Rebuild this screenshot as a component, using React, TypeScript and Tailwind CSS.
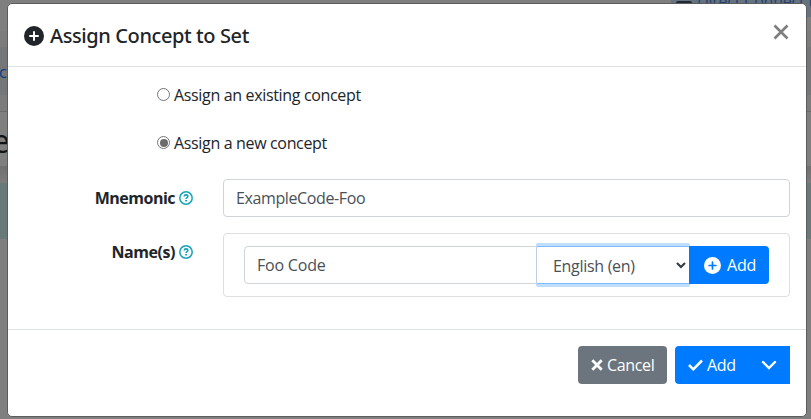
import type { ReactNode } from "react";

function HelpIcon() {
  return (
    <svg className="ml-[3px] size-[14px] shrink-0 text-[#17a2b8]" viewBox="0 0 14 14" fill="none" stroke="currentColor">
      <circle cx="7" cy="7" r="6.2" strokeWidth="1.5" />
      <path d="M5.2 5.5c.1-1 .8-1.6 1.8-1.6s1.8.6 1.8 1.5c0 1.2-1.7 1.2-1.7 2.5" strokeWidth="1.6" />
      <path d="M7.1 9v1.6" strokeWidth="1.8" />
    </svg>
  );
}

function PlusDisc({ className, plus }: { className: string; plus: string }) {
  return (
    <svg className={className} viewBox="0 0 20 20">
      <circle cx="10" cy="10" r="10" fill="currentColor" />
      <path d="M10 6v8M6 10h8" stroke={plus} strokeWidth="2" strokeLinecap="round" />
    </svg>
  );
}

function Label({ children }: { children: ReactNode }) {
  return (
    <div className="flex h-[38px] w-[169px] items-center justify-end font-bold">
      {children}
      <HelpIcon />
    </div>
  );
}

function Radio({ checked }: { checked?: boolean }) {
  return (
    <span className="mr-1 -mt-px flex size-[13px] items-center justify-center rounded-full border border-[#767676] bg-white">
      {checked && <span className="size-[8px] rounded-full bg-[#6b6b6b]" />}
    </span>
  );
}

function Page() {
  return (
    <div className="h-[419px] overflow-hidden bg-[#7f7f7f]">
      <div className="flex h-[17px] justify-end">
        <div className="flex h-[17px] w-[140px] items-start overflow-hidden bg-[#65727f] pl-[5px]">
          <span className="mt-px h-[10px] w-[16px] shrink-0 rounded-xs bg-[#222a35]" />
          <span className="-mt-[11px] ml-[5px] whitespace-nowrap text-[16px] leading-[24px] tracking-[-0.2px] text-[#26426b]">Direct Connect t</span>
        </div>
      </div>
      <div className="h-[14px]" />
      <div className="h-4 bg-[#7c7c7c]" />
      <div className="h-12 bg-[#747678] pt-[13px] text-[16px] leading-[24px] text-[#073e80]">
        <span className="-ml-px tracking-[-0.5px]">ct</span>
      </div>
      <div className="h-4 bg-[#7c7c7c]" />
      <div className="h-px bg-[#6b6b6b]" />
      <div className="h-[54px] pt-[11px] text-[32px] leading-[36px] text-[#111315]">
        <span className="-ml-[8px]">e</span>
      </div>
      <div className="h-[17px] bg-linear-to-b from-[#707070] to-[#7c7c7c]" />
      <div className="h-14 bg-[#687979]" />
    </div>
  );
}

export default function App() {
  return (
    <div className="relative h-[419px] w-[811px] overflow-hidden font-['Open_Sans','Noto_Sans',sans-serif] text-[16px] leading-[24px] text-[#212529]">
      <Page />
      <div className="absolute top-[3px] left-[7px] flex h-[414px] w-[800px] flex-col rounded-[5px] border border-[#5c5c5c] bg-white">
        <header className="flex h-[63px] items-start justify-between border-b border-[#dee2e6] px-4">
          <div className="flex h-[63px] items-center text-[20px]">
            <PlusDisc className="mr-[6px] size-5" plus="#ffffff" />
            <h5 className="font-['Noto_Sans','Open_Sans',sans-serif] font-medium tracking-[-0.4px]">Assign Concept to Set</h5>
          </div>
          <svg className="mt-5 mr-px size-4 text-[#7f7f7f]" viewBox="0 0 16 16" fill="none" stroke="currentColor" strokeWidth="2.7">
            <path d="M1.5 1.5l13 13M14.5 1.5l-13 13" />
          </svg>
        </header>
        <main className="h-[262px] px-4">
          <div className="flex h-12 items-center pt-2 pl-[133px]">
            <Radio />
            <span className="tracking-[-0.34px]">Assign an existing concept</span>
          </div>
          <div className="flex h-12 items-center pt-2 pl-[133px]">
            <Radio checked />
            <span className="tracking-[-0.34px]">Assign a new concept</span>
          </div>
          <div className="mt-4 flex">
            <div className="w-[199px]">
              <Label><span className="pr-px tracking-[-0.5px]">Mnemonic</span></Label>
            </div>
            <div className="flex h-[38px] w-[567px] items-center rounded-[4px] border border-[#ced4da] px-3 text-[#495057]">
              <span className="tracking-[-0.38px]">ExampleCode-Foo</span>
            </div>
          </div>
          <div className="mt-4 flex">
            <div className="w-[199px]">
              <Label><span className="pr-px tracking-[-0.45px]">Name(s)</span></Label>
            </div>
            <div className="flex h-[64px] w-[567px] items-center rounded-[4px] border border-[#dfdfdf] pl-5">
              <div className="flex h-[38px] w-[293px] items-center rounded-l-[4px] border border-[#ced4da] px-3 text-[#495057]">
                <span className="tracking-[-0.2px]">Foo Code</span>
              </div>
              <div className="-ml-px flex h-[38px] w-[154px] items-center justify-between rounded-xs border border-[#80bdff] border-l-[#c0cfe0] bg-white pr-[3px] pl-4 text-[#495057] shadow-[0_-3px_0_0_#bfdeff,0_3px_0_0_#bfdeff]">
                <span className="mt-[2px] tracking-[-0.3px]">English (en)</span>
                <svg className="size-[10px] text-[#343a40]" viewBox="0 0 10 10" fill="none" stroke="currentColor" strokeWidth="2.1">
                  <path d="M1 3l4 4 4-4" />
                </svg>
              </div>
              <div className="relative -ml-px flex h-[38px] w-20 items-center rounded-r-[4px] bg-[#007bff] pl-[15px] text-white">
                <PlusDisc className="mr-[6px] size-[17px]" plus="#007bff" />
                <span className="tracking-[-0.2px]">Add</span>
              </div>
            </div>
          </div>
        </main>
        <footer className="flex grow items-start justify-end gap-2 border-t border-[#dee2e6] px-4 pt-4">
          <button className="flex h-[38px] w-[89px] items-center rounded-[4px] bg-[#6c757d] pl-[13px] text-white">
            <svg className="mr-[5px] size-3" viewBox="0 0 12 12" fill="none" stroke="currentColor" strokeWidth="2.8">
              <path d="M1.3 1.3l9.4 9.4M10.7 1.3l-9.4 9.4" />
            </svg>
            <span className="-ml-px tracking-[-0.35px]">Cancel</span>
          </button>
          <div className="flex h-[38px] w-[115px] items-center rounded-l-[4px] bg-[#007bff] pl-[13px] text-white">
            <svg className="mr-1 h-3 w-[15px]" viewBox="0 0 15 12" fill="none" stroke="currentColor" strokeWidth="2.5">
              <path d="M1 6l4.3 4.3L14 1.5" />
            </svg>
            <span className="tracking-[-0.3px]">Add</span>
            <svg className="ml-[25px] h-[10px] w-4" viewBox="0 0 16 10" fill="none" stroke="currentColor" strokeWidth="2.4" strokeLinecap="round">
              <path d="M2 2l6 6 6-6" />
            </svg>
          </div>
        </footer>
      </div>
    </div>
  );
}
